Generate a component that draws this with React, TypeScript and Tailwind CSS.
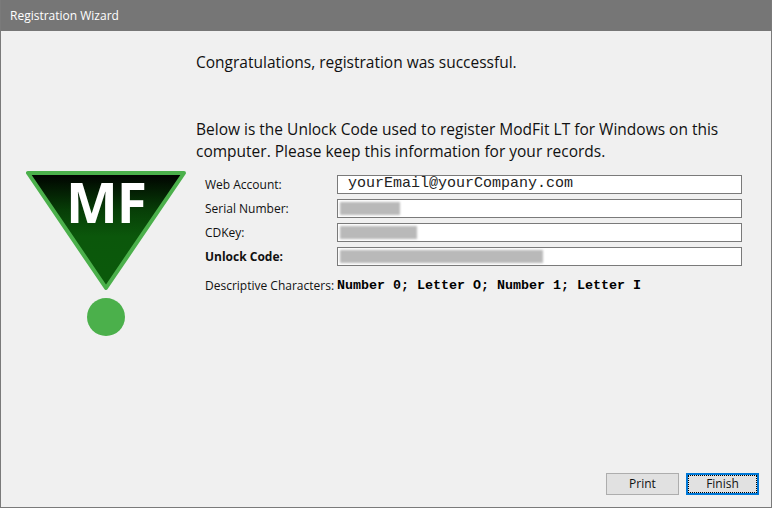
const ui = { fontFamily: '"Open Sans", "Noto Sans", sans-serif' };

function Logo() {
  return (
    <svg width="160" height="170" viewBox="0 0 160 170" className="block">
      <defs>
        <linearGradient id="mfg" x1="0" y1="0" x2="0" y2="1">
          <stop offset="0" stopColor="#000000" />
          <stop offset="0.33" stopColor="#073f07" />
          <stop offset="0.55" stopColor="#0b570b" />
          <stop offset="1" stopColor="#0b5a0b" />
        </linearGradient>
      </defs>
      <polygon points="2,2 158,2 80,117" fill="url(#mfg)" stroke="#4bb04b" strokeWidth="4" strokeLinejoin="round" />
      <text x="80" y="52" textAnchor="middle" fill="#ffffff" fontSize="55" fontWeight="700" fontFamily="Open Sans, sans-serif" letterSpacing="-1">MF</text>
      <circle cx="80" cy="146" r="19" fill="#4bb04b" />
    </svg>
  );
}

function Row({ label, bold, children }: { label: string; bold?: boolean; children?: React.ReactNode }) {
  return (
    <div className="flex items-center h-[19px]">
      <div className={`w-[132px] text-[12px] text-[#111] ${bold ? "font-bold" : ""}`}>{label}</div>
      <div className="w-[405px] h-[19px] bg-white border border-[#7a7a7a] relative flex items-center overflow-hidden">
        {children}
      </div>
    </div>
  );
}

function Blur({ w }: { w: string }) {
  return <div className={`absolute left-[2px] top-[2px] bottom-[2px] ${w} bg-[#b9b9b9] blur-[1px]`} />;
}

export default function App() {
  return (
    <div style={ui} className="w-[772px] h-[508px] flex flex-col bg-[#f0f0f0] border-x border-b border-[#7a7a7a] overflow-hidden">
      <div className="h-[31px] shrink-0 bg-[#767676] text-white text-[12px] flex items-center pl-[9px]">Registration Wizard</div>
      <div className="flex-1 flex min-h-0">
        <div className="w-[195px] shrink-0 pt-[140px] pl-[25px]">
          <Logo />
        </div>
        <div className="flex-1 min-w-0 flex flex-col">
          <p className="mt-[20px] text-[15.5px] leading-[22px] text-[#111]">Congratulations, registration was successful.</p>
          <p className="mt-[45px] text-[15.5px] leading-[22px] text-[#111] w-[540px]">Below is the Unlock Code used to register ModFit LT for Windows on this computer. Please keep this information for your records.</p>
          <div className="mt-[13px] pl-[9px] flex flex-col gap-[5px]">
            <Row label="Web Account:">
              <span className="pl-[10px] text-[#222] text-[15px]" style={{ fontFamily: '"Liberation Mono", monospace' }}>yourEmail@yourCompany.com</span>
            </Row>
            <Row label="Serial Number:"><Blur w="w-[60px]" /></Row>
            <Row label="CDKey:"><Blur w="w-[77px]" /></Row>
            <Row label="Unlock Code:" bold><Blur w="w-[203px]" /></Row>
            <div className="flex items-center mt-[5px] h-[20px]">
              <div className="w-[132px] text-[12px] text-[#111]">Descriptive Characters:</div>
              <div className="text-[13.33px] font-bold text-black" style={{ fontFamily: '"Liberation Mono", monospace' }}>Number 0; Letter O; Number 1; Letter I</div>
            </div>
          </div>
          <div className="mt-auto mb-[12px] flex justify-end gap-[7px] pr-[12px]">
            <button className="w-[73px] h-[22px] bg-[#e1e1e1] border border-[#adadad] text-[12px] text-[#111]">Print</button>
            <button className="w-[73px] h-[22px] bg-[#e1e1e1] border-2 border-[#0078d7] text-[12px] text-[#111] outline-1 outline-dotted outline-black -outline-offset-3">Finish</button>
          </div>
        </div>
      </div>
    </div>
  );
}
